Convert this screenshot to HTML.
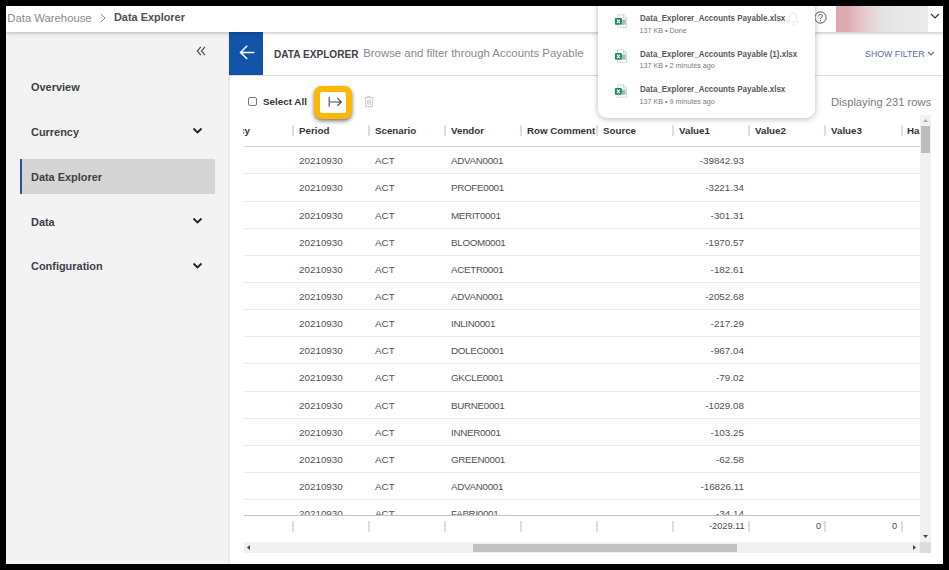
<!DOCTYPE html>
<html><head><meta charset="utf-8"><title>Data Explorer</title>
<style>
*{box-sizing:border-box;margin:0;padding:0}
html,body{width:949px;height:570px;overflow:hidden;background:#fff}
body{font-family:"Liberation Sans",sans-serif;position:relative;color:#444}
.abs{position:absolute}
.t{position:absolute;white-space:nowrap;line-height:1;transform:translateY(-50%)}
/* frame */
.fr{position:absolute;background:#000;z-index:50}
/* header */
#hdr{position:absolute;left:6px;top:6px;width:937px;height:26px;background:#fff;box-shadow:0 1px 3px rgba(0,0,0,.2),0 2px 6px rgba(0,0,0,.06);z-index:10}
/* sidebar */
#side{position:absolute;left:6px;top:32px;width:224px;height:532px;background:#f3f3f3;border-right:2px solid #e9e9e9}
.nav{font-weight:bold;font-size:11.3px;color:#3b3f45;left:30.9px;transform-origin:0 50%;transform:translateY(-50%) scaleX(.968)}
#sel{position:absolute;left:20px;top:159px;width:194.5px;height:35px;background:#d5d5d5;border-left:2px solid #2f4f9f}
/* content */
#back{position:absolute;left:229px;top:32px;width:34px;height:43px;background:#1153a8}
#tbar{position:absolute;left:229px;top:32px;width:714px;height:44px;border-bottom:1px solid #dcdcdc}
/* table */
.hd{font-weight:bold;font-size:9.5px;color:#333;top:130.6px;transform-origin:0 50%;transform:translateY(-50%) scaleX(1.026)}
.sep{position:absolute;width:2px;background:#dfdfdf;top:125px;height:11px}
.fsep{position:absolute;width:2px;background:#dedede;top:521px;height:11px}
#tbl{position:absolute;left:244px;top:0;width:676px;height:515px;overflow:hidden}
.row{position:absolute;left:0;width:676px;height:27.15px;border-top:1px solid #e9e9e9;font-size:9.85px;color:#525252}
.row .c{position:absolute;top:0;height:27.15px;line-height:28.8px;width:76px;padding-left:6px;white-space:nowrap}
.row .c.r{text-align:right;padding-right:5px;padding-left:0}
/* popup */
#pop{position:absolute;left:598px;top:0px;width:217px;height:117.5px;background:#fff;border-radius:0 0 9px 9px;box-shadow:0 1px 6px rgba(0,0,0,.28);z-index:20}
.fn{font-weight:bold;font-size:8.7px;color:#585858;left:639.5px;z-index:21;transform-origin:0 50%;transform:translateY(-50%) scaleX(.92)}
.fs{font-size:7.2px;color:#7a7a7a;left:639.5px;z-index:21}
</style></head><body>

<!-- sidebar -->
<div id="side"></div>
<div id="sel"></div>
<svg class="abs" style="left:196px;top:45.5px" width="10" height="10" viewBox="0 0 10 10"><path d="M4.8 0.8 L1.3 5 L4.8 9.2 M9 0.8 L5.5 5 L9 9.2" fill="none" stroke="#555" stroke-width="1.25"/></svg>
<div class="t nav" style="top:87.95px">Overview</div>
<div class="t nav" style="top:132.85px">Currency</div>
<div class="t nav" style="top:177.7px">Data Explorer</div>
<div class="t nav" style="top:222.55px">Data</div>
<div class="t nav" style="top:267.4px">Configuration</div>
<svg class="abs" style="left:192px;top:127px" width="11" height="8" viewBox="0 0 11 8"><path d="M1.5 1.5 L5.5 5.5 L9.5 1.5" fill="none" stroke="#222" stroke-width="1.8"/></svg>
<svg class="abs" style="left:192px;top:217px" width="11" height="8" viewBox="0 0 11 8"><path d="M1.5 1.5 L5.5 5.5 L9.5 1.5" fill="none" stroke="#222" stroke-width="1.8"/></svg>
<svg class="abs" style="left:192px;top:262px" width="11" height="8" viewBox="0 0 11 8"><path d="M1.5 1.5 L5.5 5.5 L9.5 1.5" fill="none" stroke="#222" stroke-width="1.8"/></svg>

<!-- title bar -->
<div id="tbar"></div>
<div id="back"></div>
<svg class="abs" style="left:238.6px;top:45px" width="17" height="15" viewBox="0 0 17 15"><path d="M15.4 7.4 H2 M8.2 0.8 L1.5 7.4 L8.2 14" fill="none" stroke="#fff" stroke-width="1.5"/></svg>
<div class="t" style="left:273.5px;top:54.5px;font-weight:bold;font-size:10.3px;color:#3e4248;transform-origin:0 50%;transform:translateY(-50%) scaleX(.98)">DATA EXPLORER</div>
<div class="t" style="left:363.2px;top:53.9px;font-size:11.4px;color:#8a8a8a">Browse and filter through Accounts Payable</div>
<div class="t" style="left:864.5px;top:53.9px;font-size:9.4px;color:#5d6b9c;transform-origin:0 50%;transform:translateY(-50%) scaleX(.94)">SHOW FILTER</div>
<svg class="abs" style="left:927px;top:51px" width="8" height="6" viewBox="0 0 8 6"><path d="M1 1 L4 4 L7 1" fill="none" stroke="#5d6b9c" stroke-width="1.1"/></svg>

<!-- toolbar -->
<div class="abs" style="left:248px;top:97px;width:9px;height:9px;border:1px solid #777;border-radius:2px;background:#fff"></div>
<div class="t" style="left:263px;top:102px;font-weight:bold;font-size:9.85px;color:#333">Select All</div>
<div class="abs" style="left:314px;top:86px;width:38.4px;height:33.4px;border-radius:7.5px;background:#fbb906;box-shadow:0 2px 4px rgba(0,0,0,.55)"></div>
<div class="abs" style="left:319.9px;top:91.9px;width:26.2px;height:21.6px;border-radius:2px;background:#fff"></div>
<svg class="abs" style="left:327.4px;top:96px" width="16" height="12" viewBox="0 0 16 12"><path d="M2.2 1 V10.8 M3.2 6 H14.3 M10.4 2.2 L14.3 6 L10.4 9.8" fill="none" stroke="#444" stroke-width="1.1"/></svg>
<svg class="abs" style="left:364px;top:96px" width="10" height="12" viewBox="0 0 10 12"><path d="M0.5 1.6 H9.5 M3.4 1.4 V0.6 H6.6 V1.4 M1.5 1.8 V10.6 H8.5 V1.8 M3.6 3.6 V8.8 M5 3.6 V8.8 M6.4 3.6 V8.8" fill="none" stroke="#c6c6c6" stroke-width="0.9"/></svg>
<div class="t" style="left:831px;top:102.5px;font-size:11.2px;color:#7a7a7a">Displaying 231 rows</div>

<!-- table header -->
<div class="abs" style="left:242.6px;top:120px;width:12px;height:20px;overflow:hidden"><div class="t hd" style="left:-3.3px;top:10.5px">cy</div></div>
<div class="t hd" style="left:299px">Period</div>
<div class="t hd" style="left:375px">Scenario</div>
<div class="t hd" style="left:451px">Vendor</div>
<div class="t hd" style="left:527px">Row Comment</div>
<div class="t hd" style="left:603px">Source</div>
<div class="t hd" style="left:679px">Value1</div>
<div class="t hd" style="left:755px">Value2</div>
<div class="t hd" style="left:831px">Value3</div>
<div class="abs" style="left:907px;top:120px;width:13px;height:20px;overflow:hidden"><div class="t hd" style="left:0;top:10.5px">Ha</div></div>
<div class="sep" style="left:292px"></div><div class="sep" style="left:368px"></div><div class="sep" style="left:444px"></div><div class="sep" style="left:520px"></div><div class="sep" style="left:596px"></div><div class="sep" style="left:672px"></div><div class="sep" style="left:748px"></div><div class="sep" style="left:824px"></div><div class="sep" style="left:900.5px"></div>

<!-- rows -->
<div id="tbl">
<div class="abs" style="left:0;top:146px;width:676px;height:1px;background:#d2d2d2;z-index:2"></div>
<div class="row" style="top:146.20px"><span class="c" style="left:49px">20210930</span><span class="c" style="left:125px">ACT</span><span class="c" style="left:201px;letter-spacing:-.33px">ADVAN0001</span><span class="c r" style="left:429px">-39842.93</span></div>
<div class="row" style="top:173.35px"><span class="c" style="left:49px">20210930</span><span class="c" style="left:125px">ACT</span><span class="c" style="left:201px;letter-spacing:-.33px">PROFE0001</span><span class="c r" style="left:429px">-3221.34</span></div>
<div class="row" style="top:200.50px"><span class="c" style="left:49px">20210930</span><span class="c" style="left:125px">ACT</span><span class="c" style="left:201px;letter-spacing:-.33px">MERIT0001</span><span class="c r" style="left:429px">-301.31</span></div>
<div class="row" style="top:227.65px"><span class="c" style="left:49px">20210930</span><span class="c" style="left:125px">ACT</span><span class="c" style="left:201px;letter-spacing:-.33px">BLOOM0001</span><span class="c r" style="left:429px">-1970.57</span></div>
<div class="row" style="top:254.80px"><span class="c" style="left:49px">20210930</span><span class="c" style="left:125px">ACT</span><span class="c" style="left:201px;letter-spacing:-.33px">ACETR0001</span><span class="c r" style="left:429px">-182.61</span></div>
<div class="row" style="top:281.95px"><span class="c" style="left:49px">20210930</span><span class="c" style="left:125px">ACT</span><span class="c" style="left:201px;letter-spacing:-.33px">ADVAN0001</span><span class="c r" style="left:429px">-2052.68</span></div>
<div class="row" style="top:309.10px"><span class="c" style="left:49px">20210930</span><span class="c" style="left:125px">ACT</span><span class="c" style="left:201px;letter-spacing:-.33px">INLIN0001</span><span class="c r" style="left:429px">-217.29</span></div>
<div class="row" style="top:336.25px"><span class="c" style="left:49px">20210930</span><span class="c" style="left:125px">ACT</span><span class="c" style="left:201px;letter-spacing:-.33px">DOLEC0001</span><span class="c r" style="left:429px">-967.04</span></div>
<div class="row" style="top:363.40px"><span class="c" style="left:49px">20210930</span><span class="c" style="left:125px">ACT</span><span class="c" style="left:201px;letter-spacing:-.33px">GKCLE0001</span><span class="c r" style="left:429px">-79.02</span></div>
<div class="row" style="top:390.55px"><span class="c" style="left:49px">20210930</span><span class="c" style="left:125px">ACT</span><span class="c" style="left:201px;letter-spacing:-.33px">BURNE0001</span><span class="c r" style="left:429px">-1029.08</span></div>
<div class="row" style="top:417.70px"><span class="c" style="left:49px">20210930</span><span class="c" style="left:125px">ACT</span><span class="c" style="left:201px;letter-spacing:-.33px">INNER0001</span><span class="c r" style="left:429px">-103.25</span></div>
<div class="row" style="top:444.85px"><span class="c" style="left:49px">20210930</span><span class="c" style="left:125px">ACT</span><span class="c" style="left:201px;letter-spacing:-.33px">GREEN0001</span><span class="c r" style="left:429px">-62.58</span></div>
<div class="row" style="top:472.00px"><span class="c" style="left:49px">20210930</span><span class="c" style="left:125px">ACT</span><span class="c" style="left:201px;letter-spacing:-.33px">ADVAN0001</span><span class="c r" style="left:429px">-16826.11</span></div>
<div class="row" style="top:499.15px"><span class="c" style="left:49px">20210930</span><span class="c" style="left:125px">ACT</span><span class="c" style="left:201px;letter-spacing:-.33px">FABRI0001</span><span class="c r" style="left:429px">-34.14</span></div>
</div>

<!-- footer -->
<div class="abs" style="left:244px;top:515px;width:676px;height:1px;background:#c4c4c4"></div>
<div class="abs" style="left:244px;top:516px;width:676px;height:26px;background:#fff"></div>
<div class="fsep" style="left:292px"></div><div class="fsep" style="left:368px"></div><div class="fsep" style="left:444px"></div><div class="fsep" style="left:520px"></div><div class="fsep" style="left:596px"></div><div class="fsep" style="left:672px"></div><div class="fsep" style="left:748px"></div><div class="fsep" style="left:824px"></div><div class="fsep" style="left:900.5px"></div>
<div class="t" style="right:204.4px;top:527.3px;font-size:9.2px;color:#4a4a4a">-2029.11</div>
<div class="t" style="right:127.8px;top:527.3px;font-size:9.2px;color:#4a4a4a">0</div>
<div class="t" style="right:51.8px;top:527.3px;font-size:9.2px;color:#4a4a4a">0</div>

<!-- scrollbars -->
<div class="abs" style="left:920px;top:115px;width:11px;height:427px;background:#f1f1f1"></div>
<div class="abs" style="left:921px;top:126px;width:9px;height:26.6px;background:#bcbcbc"></div>
<svg class="abs" style="left:923px;top:119px" width="5" height="3" viewBox="0 0 5 3"><path d="M0 3 L2.5 0 L5 3 Z" fill="#a8a8a8"/></svg>
<svg class="abs" style="left:922.9px;top:534.5px" width="5" height="3" viewBox="0 0 5 3"><path d="M0 0 L2.5 3 L5 0 Z" fill="#444"/></svg>
<div class="abs" style="left:244px;top:542.3px;width:676px;height:11.1px;background:#f1f1f1"></div>
<div class="abs" style="left:920px;top:542.3px;width:11px;height:11.1px;background:#dcdcdc"></div>
<div class="abs" style="left:473.3px;top:544px;width:263.4px;height:8px;background:#c1c1c1"></div>
<svg class="abs" style="left:247.3px;top:545.4px" width="3" height="5" viewBox="0 0 3 5"><path d="M3 0 L0 2.5 L3 5 Z" fill="#444"/></svg>
<svg class="abs" style="left:912.6px;top:545.4px" width="3" height="5" viewBox="0 0 3 5"><path d="M0 0 L3 2.5 L0 5 Z" fill="#444"/></svg>

<!-- header -->
<div id="hdr"></div>
<div class="t" style="left:7.3px;top:18.6px;font-size:11.3px;color:#8a8a8a;z-index:11">Data Warehouse</div>
<svg class="abs" style="left:99.6px;top:13.4px;z-index:11" width="6" height="10" viewBox="0 0 6 10"><path d="M1 1 L5 5 L1 9" fill="none" stroke="#8a8a8a" stroke-width="1"/></svg>
<div class="t" style="left:113.6px;top:18.2px;font-size:11.3px;font-weight:bold;color:#505050;z-index:11;transform-origin:0 50%;transform:translateY(-50%) scaleX(.965)">Data Explorer</div>
<svg class="abs" style="left:812.6px;top:9.8px;z-index:11" width="15" height="15" viewBox="0 0 15 15"><circle cx="7.5" cy="7.5" r="5.6" fill="none" stroke="#444" stroke-width="0.9"/><path d="M5.6 6.1 C5.6 3.9 9.4 3.9 9.4 6.1 C9.4 7.4 7.5 7.4 7.5 9" fill="none" stroke="#444" stroke-width="1"/><circle cx="7.5" cy="10.6" r="0.7" fill="#444"/></svg>
<div class="abs" style="left:836px;top:6px;width:92px;height:26px;background:linear-gradient(90deg,#e0a8b0 0%,#e1abb3 13%,#e5cdd0 33%,#e5e0e0 48%,#e6e6e6 62%,#ebebeb 100%);z-index:11"></div>
<svg class="abs" style="left:930px;top:13px;z-index:11" width="10" height="7" viewBox="0 0 10 7"><path d="M1 1 L5 5 L9 1" fill="none" stroke="#333" stroke-width="1.1"/></svg>

<!-- download popup -->
<div id="pop"></div>
<svg class="abs" style="left:786px;top:9.8px;z-index:21" width="14" height="16" viewBox="0 0 14 16"><path d="M2 12 C3.5 10.5 3 7 4 5 C5 3 6 2.6 7 2.6 C8 2.6 9 3 10 5 C11 7 10.5 10.5 12 12 Z M5.8 13.5 C6 14.8 8 14.8 8.2 13.5" fill="none" stroke="#e9e9e9" stroke-width="1.1"/></svg>
<svg class="abs" style="left:614px;top:13.5px;z-index:21" width="14" height="14" viewBox="0 0 14 14"><path d="M3.5 0.8 H9.5 L12.6 3.9 V13.2 H3.5 Z" fill="#fff" stroke="#c9c9c9" stroke-width="0.8"/><path d="M9.5 0.8 V3.9 H12.6" fill="none" stroke="#c9c9c9" stroke-width="0.8"/><rect x="8" y="5.5" width="3.6" height="5.2" fill="#8fc7a8"/><rect x="0.9" y="4.1" width="7" height="6.6" rx="1" fill="#1d8a5c"/><path d="M3 5.7 L5.8 9.1 M5.8 5.7 L3 9.1" stroke="#fff" stroke-width="1.1"/></svg>
<svg class="abs" style="left:614px;top:48.8px;z-index:21" width="14" height="14" viewBox="0 0 14 14"><path d="M3.5 0.8 H9.5 L12.6 3.9 V13.2 H3.5 Z" fill="#fff" stroke="#c9c9c9" stroke-width="0.8"/><path d="M9.5 0.8 V3.9 H12.6" fill="none" stroke="#c9c9c9" stroke-width="0.8"/><rect x="8" y="5.5" width="3.6" height="5.2" fill="#8fc7a8"/><rect x="0.9" y="4.1" width="7" height="6.6" rx="1" fill="#1d8a5c"/><path d="M3 5.7 L5.8 9.1 M5.8 5.7 L3 9.1" stroke="#fff" stroke-width="1.1"/></svg>
<svg class="abs" style="left:614px;top:84.1px;z-index:21" width="14" height="14" viewBox="0 0 14 14"><path d="M3.5 0.8 H9.5 L12.6 3.9 V13.2 H3.5 Z" fill="#fff" stroke="#c9c9c9" stroke-width="0.8"/><path d="M9.5 0.8 V3.9 H12.6" fill="none" stroke="#c9c9c9" stroke-width="0.8"/><rect x="8" y="5.5" width="3.6" height="5.2" fill="#8fc7a8"/><rect x="0.9" y="4.1" width="7" height="6.6" rx="1" fill="#1d8a5c"/><path d="M3 5.7 L5.8 9.1 M5.8 5.7 L3 9.1" stroke="#fff" stroke-width="1.1"/></svg>
<div class="t fn" style="top:18.3px">Data_Explorer_Accounts Payable.xlsx</div>
<div class="t fs" style="top:31px">137 KB &bull; Done</div>
<div class="t fn" style="top:53.6px">Data_Explorer_Accounts Payable (1).xlsx</div>
<div class="t fs" style="top:66.2px">137 KB &bull; 2 minutes ago</div>
<div class="t fn" style="top:88.9px">Data_Explorer_Accounts Payable.xlsx</div>
<div class="t fs" style="top:101.5px">137 KB &bull; 9 minutes ago</div>

<!-- black frame -->
<div class="fr" style="left:0;top:0;width:949px;height:6px"></div>
<div class="fr" style="left:0;top:564px;width:949px;height:6px"></div>
<div class="fr" style="left:0;top:0;width:6px;height:570px"></div>
<div class="fr" style="left:943px;top:0;width:6px;height:570px"></div>
</body></html>
